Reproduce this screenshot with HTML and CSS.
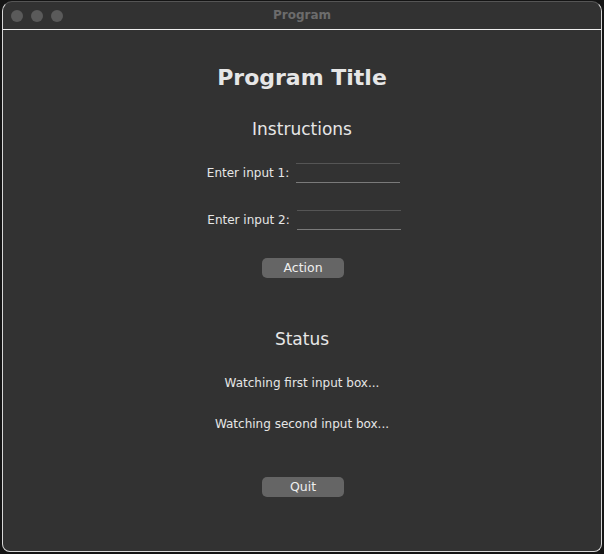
FILE: index.html
```html
<!DOCTYPE html>
<html>
<head>
<meta charset="utf-8">
<link rel="stylesheet" href="styles.css">
</head>
<body>
<div class="window">
  <div class="titlebar">
    <div class="lights"><span class="light"></span><span class="light"></span><span class="light"></span></div>
    <div class="wtitle">Program</div>
  </div>
  <div class="content">
    <h1 class="title">Program Title</h1>
    <h2 class="heading">Instructions</h2>
    <div class="row row1">
      <span class="label">Enter input 1:</span>
      <span class="field"></span>
    </div>
    <div class="row row2">
      <span class="label">Enter input 2:</span>
      <span class="field"></span>
    </div>
    <div class="btn action">Action</div>
    <h2 class="heading status">Status</h2>
    <div class="msg msg1">Watching first input box...</div>
    <div class="msg msg2">Watching second input box...</div>
    <div class="btn quit">Quit</div>
  </div>
</div>
</body>
</html>
```
FILE: styles.css
```css
html, body {
  margin: 0;
  padding: 0;
  background: #141414;
  width: 604px;
  height: 554px;
  overflow: hidden;
}
body {
  padding: 1px 2px 2px 2px;
  box-sizing: border-box;
  font-family: "DejaVu Sans", sans-serif;
}
.window {
  box-sizing: border-box;
  width: 600px;
  height: 551px;
  background: #323232;
  border: 1px solid #d8d8d8;
  border-top-color: #555;
  border-radius: 10px 10px 8px 8px;
  display: flex;
  flex-direction: column;
  overflow: hidden;
}
.titlebar {
  height: 27px;
  border-bottom: 1px solid #f0f0f0;
  display: flex;
  align-items: center;
  position: relative;
  flex: none;
}
.lights {
  display: flex;
  gap: 8px;
  padding-left: 8px;
}
.light {
  width: 12px;
  height: 12px;
  border-radius: 50%;
  background: #5a5a5a;
}
.wtitle {
  position: absolute;
  left: 0;
  right: 0;
  text-align: center;
  color: #6c6c6c;
  font-weight: bold;
  font-size: 12px;
  top: 6px;
}
.content {
  display: flex;
  flex-direction: column;
  align-items: center;
  color: #e6e6e6;
}
.title {
  margin: 34px 0 0 0;
  font-size: 22px;
  font-weight: bold;
  line-height: 28px;
}
.heading {
  margin: 26px 0 0 0;
  font-size: 17px;
  font-weight: normal;
  line-height: 22px;
}
.row {
  display: flex;
  align-items: center;
  font-size: 12px;
  gap: 7px;
}
.row1 { margin-top: 23px; margin-left: 3px; }
.row2 { margin-top: 27px; margin-left: 4px; }
.field {
  width: 104px;
  height: 18px;
  border-top: 1px solid #555;
  border-bottom: 1px solid #7a7a7a;
}
.btn {
  width: 82px;
  height: 20px;
  border-radius: 5px;
  background: #656565;
  color: #eeeeee;
  font-size: 12.5px;
  line-height: 20px;
  text-align: center;
  margin-left: 2px;
}
.action { margin-top: 28px; }
.status { margin-top: 50px; }
.msg { font-size: 12px; line-height: 16px; }
.msg1 { margin-top: 25px; }
.msg2 { margin-top: 25px; }
.quit { margin-top: 45px; }
```
